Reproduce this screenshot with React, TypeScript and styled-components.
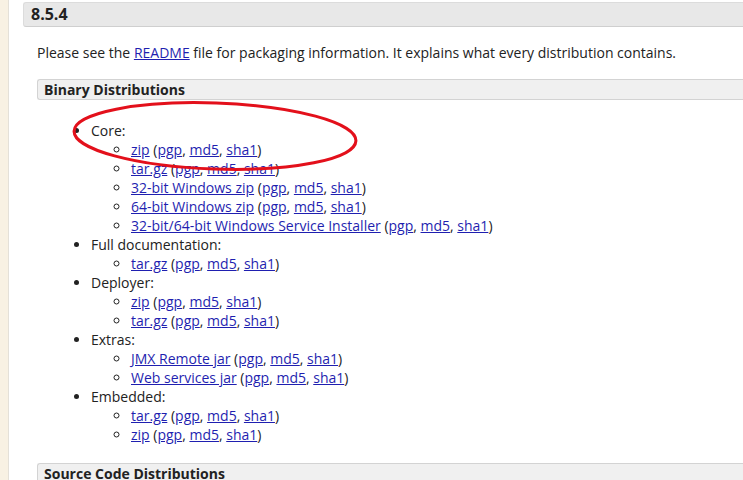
import React from 'react';
import styled, { createGlobalStyle } from 'styled-components';

const GlobalStyle = createGlobalStyle`
  html, body {
    margin: 0;
    padding: 0;
    background: #ffffff;
  }
  body {
    font-family: "Open Sans", "Liberation Sans", sans-serif;
    font-size: 14px;
    color: #222;
  }
`;

type Link = { label: string };
type Sub = { main: string };
type Group = { title: string; items: Sub[] };

const groups: Group[] = [
  {
    title: 'Core:',
    items: [
      { main: 'zip' },
      { main: 'tar.gz' },
      { main: '32-bit Windows zip' },
      { main: '64-bit Windows zip' },
      { main: '32-bit/64-bit Windows Service Installer' },
    ],
  },
  { title: 'Full documentation:', items: [{ main: 'tar.gz' }] },
  { title: 'Deployer:', items: [{ main: 'zip' }, { main: 'tar.gz' }] },
  { title: 'Extras:', items: [{ main: 'JMX Remote jar' }, { main: 'Web services jar' }] },
  { title: 'Embedded:', items: [{ main: 'tar.gz' }, { main: 'zip' }] },
];

const sigs: Link[] = [{ label: 'pgp' }, { label: 'md5' }, { label: 'sha1' }];

const App: React.FC = () => {
  return (
    <Page>
      <GlobalStyle />
      <Strip />
      <Main>
        <VersionTitle>8.5.4</VersionTitle>
        <Section>
          <Intro>
            Please see the <A href="#">README</A> file for packaging information. It explains what every distribution contains.
          </Intro>
          <SubTitle>Binary Distributions</SubTitle>
          <ListWrap>
            <Outer>
              {groups.map((g) => (
                <li key={g.title}>
                  {g.title}
                  <Inner>
                    {g.items.map((it, i) => (
                      <li key={i}>
                        <A href="#">{it.main}</A> (
                        {sigs.map((s, j) => (
                          <React.Fragment key={s.label}>
                            <A href="#">{s.label}</A>
                            {j < sigs.length - 1 ? ', ' : ''}
                          </React.Fragment>
                        ))}
                        )
                      </li>
                    ))}
                  </Inner>
                </li>
              ))}
            </Outer>
            {/* red hand-drawn highlight around "Core" */}
            <Circle width="300" height="80" viewBox="0 0 300 80">
              <ellipse cx="150" cy="40" rx="141" ry="33" fill="none" stroke="#e3101b" strokeWidth="3" transform="rotate(2 150 40)" />
            </Circle>
          </ListWrap>
          <SubTitle>Source Code Distributions</SubTitle>
        </Section>
      </Main>
    </Page>
  );
};

export default App;

const Page = styled.div`
  display: flex;
  min-height: 480px;
  overflow: hidden;
`;

const Strip = styled.div`
  width: 8px;
  flex: none;
  background: #f8f1e3;
  border-right: 1px solid #e4e0d8;
`;

const Main = styled.div`
  flex: 1;
  padding: 2px 0 0 14px;
  min-width: 0;
`;

const VersionTitle = styled.h3`
  margin: 0;
  height: 23px;
  line-height: 23px;
  padding-left: 7px;
  font-size: 16px;
  font-weight: 700;
  color: #222;
  background: #e8e8e8;
  border: 1px solid #dcdcdc;
  border-bottom-color: #cfcfcf;
  border-radius: 3px 0 0 3px;
  border-right: none;
`;

const Section = styled.div`
  padding-left: 14px;
`;

const Intro = styled.p`
  margin: 16px 0 17px;
  line-height: 19px;
`;

const A = styled.a`
  color: #1f1fb0;
  text-decoration: underline;
`;

const SubTitle = styled.h4`
  margin: 0;
  height: 19px;
  line-height: 19px;
  padding-left: 6px;
  font-size: 14px;
  font-weight: 700;
  background: #f0f0f0;
  border: 1px solid #d3d3d3;
  border-right: none;
  border-radius: 3px 0 0 3px;
`;

const ListWrap = styled.div`
  position: relative;
  padding: 21px 0 19px;
`;

const Outer = styled.ul`
  margin: 0;
  padding-left: 54px;
  line-height: 19px;
  list-style: disc;
`;

const Inner = styled.ul`
  margin: 0;
  padding-left: 40px;
  list-style: circle;
`;

const Circle = styled.svg`
  position: absolute;
  left: 28px;
  top: -4px;
  pointer-events: none;
`;
